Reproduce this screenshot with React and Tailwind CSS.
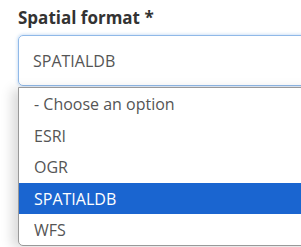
import React from "react";

const options = [
  { label: "- Choose an option", cls: "h-[32px]" },
  { label: "ESRI", cls: "h-[31px]" },
  { label: "OGR", cls: "h-[32px]" },
  { label: "SPATIALDB", cls: "h-[31px]", selected: true },
  { label: "WFS", cls: "h-[31px]" },
];

export default function App() {
  return (
    <div className="h-[247px] w-[301px] overflow-hidden bg-white font-['Open_Sans',sans-serif]">
      <div className="pl-[18px] pt-[7px]">
        <label className="block text-[17px] font-bold leading-[22px] text-[#333]">
          Spatial format *
        </label>
        <div className="mt-[6px] flex h-[51px] w-[320px] items-center rounded-[5px] border border-[#90b9e8] pl-[14px] text-[16px] text-[#555] shadow-[0_0_3px_1px_rgba(150,190,235,0.45)]">
          SPATIALDB
        </div>
        <div className="mt-px w-[320px] rounded-b-[5px] border border-[#999] bg-white shadow-[-6px_2px_12px_rgba(0,0,0,0.15)]">
          {options.map((o) => (
            <div
              key={o.label}
              className={
                o.cls +
                " flex items-center pl-[15px] text-[16px] " +
                (o.selected ? "bg-[#1a65d0] text-white" : "text-[#555]")
              }
            >
              {o.label}
            </div>
          ))}
        </div>
      </div>
    </div>
  );
}
